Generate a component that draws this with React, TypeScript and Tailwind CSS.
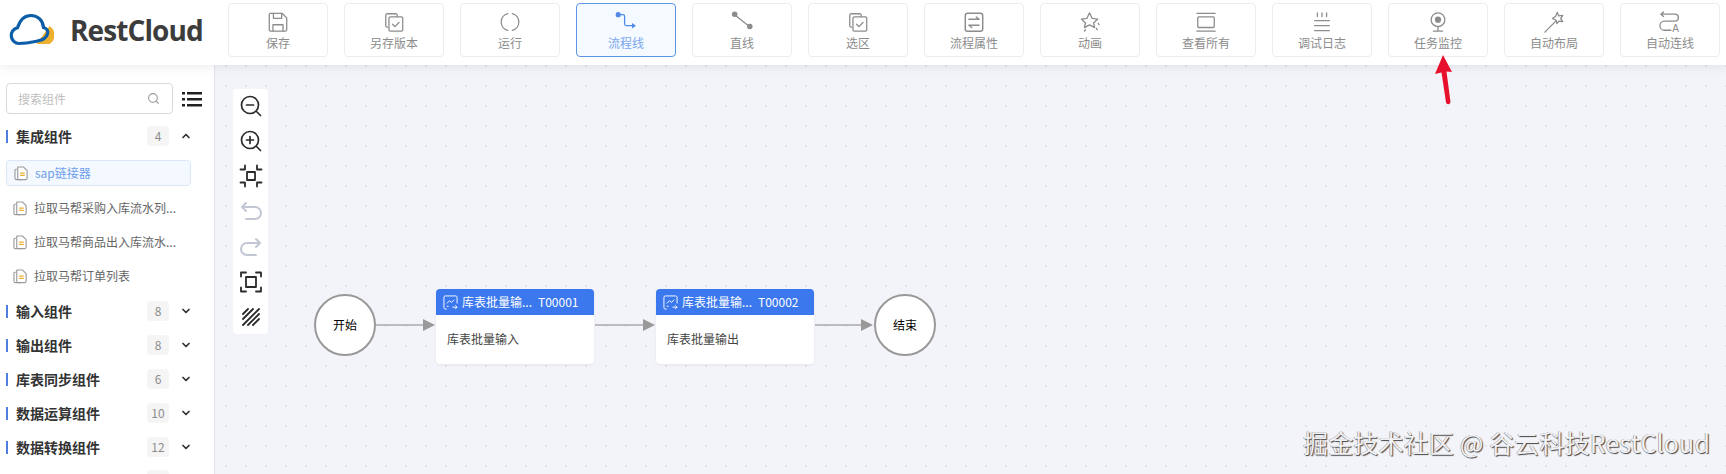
import type { ReactNode } from "react";
import { ChevronDown, ChevronUp, Search } from "lucide-react";

const cjk = "font-['Noto_Sans_CJK_SC','Noto_Sans',sans-serif]";

function Svg({ children, color = "#8c8c8c", width = 1.4, small = true }: { children: ReactNode; color?: string; width?: number; small?: boolean }) {
  return (
    <svg
      viewBox="0 0 24 24"
      className={small ? "h-[22px] w-[22px]" : "h-6 w-6"}
      fill="none"
      stroke={color}
      strokeWidth={width}
      strokeLinecap="round"
      strokeLinejoin="round"
    >
      {children}
    </svg>
  );
}

const CopyCheck = () => (
  <Svg>
    <path d="M5 17.500h-.5A1.500 1.500 0 0 1 3 16V4.500A1.500 1.500 0 0 1 4.500 3H14a1.500 1.500 0 0 1 1.500 1.500V6" />
    <rect x="6.500" y="6.500" width="15" height="15.500" rx="1.500" />
    <path d="m10.500 14.500 2.500 2.500 4.500-4.500" />
  </Svg>
);

const tools: { label: string; icon: ReactNode; active?: boolean }[] = [
  {
    label: "保存",
    icon: (
      <Svg>
        <path d="M3.500 2.500h13l5 5v13a1.500 1.500 0 0 1-1.500 1.500H4a1.500 1.500 0 0 1-1.500-1.500V4a1.500 1.500 0 0 1 1-1.500Z" />
        <path d="M7 2.500V8h9V2.500M6.500 22v-7h11v7" />
      </Svg>
    ),
  },
  { label: "另存版本", icon: <CopyCheck /> },
  {
    label: "运行",
    icon: (
      <Svg>
        <path d="M9.500 2.800a9.500 9.500 0 0 0 0 18.400M14.500 2.800a9.500 9.500 0 0 1 0 18.400" />
      </Svg>
    ),
  },
  {
    label: "流程线",
    active: true,
    icon: (
      <Svg color="#4f8ae6">
        <circle cx="3.500" cy="4" r="2.800" fill="#4f8ae6" stroke="none" />
        <path d="M6 4h2.500a2 2 0 0 1 2 2v8a2 2 0 0 0 2 2h7" />
        <path d="M18.500 13v6l4.500-3Z" fill="#4f8ae6" stroke="none" />
      </Svg>
    ),
  },
  {
    label: "直线",
    icon: (
      <Svg>
        <path d="m4 4 16 13" />
        <circle cx="4" cy="3.500" r="3" fill="#8c8c8c" stroke="none" />
        <circle cx="20.500" cy="17" r="3" fill="#8c8c8c" stroke="none" />
      </Svg>
    ),
  },
  { label: "选区", icon: <CopyCheck /> },
  {
    label: "流程属性",
    icon: (
      <Svg width={1.6}>
        <rect x="2.500" y="2.500" width="19" height="19.500" rx="2.500" />
        <path d="M6.500 9h11M14.500 6.500l3 2.500M17.500 15.500h-11M9.500 18l-3-2.500" />
      </Svg>
    ),
  },
  {
    label: "动画",
    icon: (
      <Svg>
        <path d="m11.500 2 2.800 6 6.200.8-4.600 4.300 1.200 5-5.600-3-5.600 3 1.200-5L2.500 8.800l6.200-.8Z" />
        <path d="m21 13.500 1 1.500M19 19l1 1.500M7 20.500 6 22" />
      </Svg>
    ),
  },
  {
    label: "查看所有",
    icon: (
      <Svg>
        <path d="M2 2.500h20M2 22h20" />
        <rect x="3" y="6.500" width="18" height="11.500" rx="1" />
      </Svg>
    ),
  },
  {
    label: "调试日志",
    icon: (
      <Svg>
        <path d="M7 2v4M12 2v4M17 2v4M4 10.500h16M4 16h16M4 21.500h16" />
      </Svg>
    ),
  },
  {
    label: "任务监控",
    icon: (
      <Svg>
        <circle cx="12" cy="9.500" r="7.500" />
        <circle cx="12" cy="9.500" r="2.700" fill="#8c8c8c" />
        <path d="M12 17v4M7 22h10" />
      </Svg>
    ),
  },
  {
    label: "自动布局",
    icon: (
      <Svg>
        <path d="m2 23 12.500-12.500" />
        <path d="m15.500 1.500 1.600 3.700 4.500-.5-2.300 3.700 2.200 3.100-4.300-.5-2 2.800-1.200-4-3.800-1.600 3.500-2.200Z" />
      </Svg>
    ),
  },
  {
    label: "自动连线",
    icon: (
      <Svg>
        <path d="M5 1 2 3.500 5 6M2 3.500h16a3.800 3.800 0 0 1 0 7.500H6a4.500 4.500 0 0 0 0 10h7" />
        <text x="14.500" y="22.500" fontSize="11" fill="#8c8c8c" stroke="none" fontFamily="Liberation Sans, sans-serif">
          A
        </text>
      </Svg>
    ),
  },
];

function ToolButton({ label, icon, active }: { label: string; icon: ReactNode; active?: boolean }) {
  return (
    <div
      className={
        active
          ? "flex h-[54px] w-[100px] shrink-0 flex-col items-center rounded border border-[#5c94e8] bg-[#f4faff] pt-[7px] text-xs leading-[18px] text-[#7aa5ee]"
          : "flex h-[54px] w-[100px] shrink-0 flex-col items-center rounded border border-[#ececee] bg-white pt-[7px] text-xs leading-[18px] text-[#8c8c8c]"
      }
    >
      {icon}
      <span className="mt-px">{label}</span>
    </div>
  );
}

function Logo() {
  return (
    <div className="flex h-[54px] w-[228px] shrink-0 items-center pl-2">
      <svg viewBox="0 0 46 34" className="h-[34px] w-[46px]" fill="none">
        <path d="M30 31h13a10.500 10.500 0 0 0 0-18Z" fill="#edb02e" transform="translate(-1.500 0)" />
        <path
          d="M11 30.500a8 8 0 0 1-1.500-15.800C12 7 17 2.500 23 2.500c7 0 12 5 12.500 12 3.500 1 5 3.500 4 6.500-1 3.500-5 6-10 7-4 .8-10 2.500-18.500 2.500Z"
          stroke="#0d5ea8"
          strokeWidth="3.200"
        />
      </svg>
      <span className="ml-4 font-['Open_Sans',sans-serif] text-[28px] font-bold tracking-[-0.9px] text-[#3c3c3c]">RestCloud</span>
    </div>
  );
}

function DocIcon() {
  return (
    <svg viewBox="0 0 16 16" className="h-[15px] w-[15px] shrink-0" fill="none" strokeLinejoin="round">
      <path d="M3 3.500H2a1 1 0 0 0-1 1V13a1.500 1.500 0 0 0 1.500 1.500H8" stroke="#9a9a9a" strokeWidth="1.200" />
      <path d="M4 1h6l4 4v8a1.500 1.500 0 0 1-1.500 1.500h-7A1.500 1.500 0 0 1 4 13Z" fill="#fff" stroke="#9a9a9a" strokeWidth="1.200" />
      <path d="M6.500 7.500h5M6.500 10h5" stroke="#edb02e" strokeWidth="1.300" />
    </svg>
  );
}

function SectionRow({ name, count, open }: { name: string; count: number; open?: boolean }) {
  return (
    <div className="flex h-[34px] items-center pl-1.5">
      <span className="h-[13px] w-0.5 bg-[#4f7fdc]" />
      <span className="ml-2 w-[131px] text-sm font-bold text-[#333]">{name}</span>
      <span className="flex h-5 w-[22px] items-center justify-center rounded-sm bg-[#f5f5f5] text-xs text-[#8c8c8c]">{count}</span>
      {open ? (
        <ChevronUp className="ml-[11px] h-3 w-3 text-[#333]" strokeWidth={3.500} />
      ) : (
        <ChevronDown className="ml-[11px] h-3 w-3 text-[#333]" strokeWidth={3.500} />
      )}
    </div>
  );
}

function Sidebar() {
  const items = ["拉取马帮采购入库流水列...", "拉取马帮商品出入库流水...", "拉取马帮订单列表"];
  const sections: [string, number][] = [
    ["输入组件", 8],
    ["输出组件", 8],
    ["库表同步组件", 6],
    ["数据运算组件", 10],
    ["数据转换组件", 12],
  ];
  return (
    <aside className="h-[409px] w-[215px] shrink-0 overflow-hidden border-r border-[#e3e5ea] bg-white pt-[18px]">
      <div className="flex items-center pl-1.5">
        <div className="flex h-[31px] w-[167px] items-center justify-between rounded border border-[#d9d9d9] pl-[11px] pr-3 text-xs text-[#bfbfbf]">
          搜索组件
          <Search className="h-[13px] w-[13px] text-[#999]" />
        </div>
        <svg viewBox="0 0 20 16" className="ml-[9px] h-4 w-5" fill="#222">
          <rect x="0" y="1" width="3" height="2.500" />
          <rect x="5" y="1" width="15" height="2.500" />
          <rect x="0" y="7" width="3" height="2.500" />
          <rect x="5" y="7" width="15" height="2.500" />
          <rect x="0" y="13" width="3" height="2.500" />
          <rect x="5" y="13" width="15" height="2.500" />
        </svg>
      </div>
      <div className="mt-[5px]">
        <SectionRow name="集成组件" count={4} open />
      </div>
      <div className="mx-1.5 mt-[7px] flex h-[26px] w-[185px] items-center gap-[6px] rounded border border-[#dbe7f7] bg-[#f4f9ff] pl-[7px] text-xs text-[#6d9eeb]">
        <DocIcon />
        sap链接器
      </div>
      <div className="mt-[5px]">
        {items.map((item) => (
          <div key={item} className="flex h-[34px] items-center gap-[6px] pl-[13px] text-xs text-[#666]">
            <DocIcon />
            {item}
          </div>
        ))}
      </div>
      <div className="mt-px">
        {sections.map(([name, count]) => (
          <SectionRow key={name} name={name} count={count} />
        ))}
      </div>
      <div className="ml-[147px] mt-[6px] h-5 w-[22px] rounded-sm bg-[#f5f5f5]" />
    </aside>
  );
}

function CanvasTools() {
  const dark = "#2b2b2b";
  const light = "#c3c7d4";
  return (
    <div className="absolute left-[18px] top-[24px] flex h-[245px] w-[35px] flex-col items-center justify-between rounded-sm bg-white py-[5px]">
      <Svg color={dark} width={1.700} small={false}>
        <circle cx="11" cy="11" r="8.500" />
        <path d="m17.500 17.500 4 4M7.500 11h7" />
      </Svg>
      <Svg color={dark} width={1.700} small={false}>
        <circle cx="11" cy="11" r="8.500" />
        <path d="m17.500 17.500 4 4M7.500 11h7M11 7.500v7" />
      </Svg>
      <Svg color={dark} width={1.800} small={false}>
        <rect x="8" y="8" width="8" height="8" />
        <path d="M6 1.500V5.500H1.500M18 1.500V5.500h4.500M6 22.500V18.500H1.500M18 22.500V18.500h4.500" />
      </Svg>
      <Svg color={light} width={2} small={false}>
        <path d="M7 4 3 8l4 4M3 8h13a5.500 5.500 0 0 1 0 12H7" />
      </Svg>
      <Svg color={light} width={2} small={false}>
        <path d="m17 4 4 4-4 4M21 8H8a5.500 5.500 0 0 0 0 12h9" />
      </Svg>
      <Svg color={dark} width={1.800} small={false}>
        <rect x="7" y="7" width="10" height="10" />
        <path d="M2 6.500V2.500h5M17 2.500h5v4M2 17.500v4h5M17 21.500h5v-4" />
      </Svg>
      <Svg color={dark} width={1.800} small={false}>
        <path d="M4 9 9 4M4 14 14 4M4 20 20 4M9 20 20 9M14 20l6-6" />
      </Svg>
    </div>
  );
}

function CircleNode({ label, left }: { label: string; left: string }) {
  return (
    <div
      className={`absolute top-[229px] flex h-[62px] w-[62px] items-center justify-center rounded-full border-2 border-[#999] bg-white text-xs text-black ${left}`}
    >
      {label}
    </div>
  );
}

function TaskNode({ title, code, body, left }: { title: string; code: string; body: string; left: string }) {
  return (
    <div className={`absolute top-[224px] h-[75px] w-[158px] overflow-hidden rounded bg-white text-xs shadow-[0_1px_3px_rgba(0,0,0,0.06)] ${left}`}>
      <div className="flex h-[26px] items-center bg-[#3b78ee] pl-[7px] text-white">
        <svg viewBox="0 0 16 16" className="h-[15px] w-[15px]" fill="none" stroke="#fff" strokeWidth="1">
          <path d="M4 15H2.500A1.500 1.500 0 0 1 1 13.500v-11A1.500 1.500 0 0 1 2.500 1h11A1.500 1.500 0 0 1 15 2.500V9" />
          <path d="m4 9 3-3 2 2 3-3M4 12h2M10 13h5m-2-2 2 2-2 2" />
        </svg>
        <span className="ml-[4px]">{title}</span>
        <span className="ml-1.5">{code}</span>
      </div>
      <div className="pl-[11px] pt-4 text-[#444]">{body}</div>
    </div>
  );
}

function Edge({ x, w }: { x: number; w: number }) {
  return (
    <svg className="absolute top-[254px]" style={{ left: x, width: w }} height="12" viewBox={`0 0 ${w} 12`}>
      <path d={`M0 6H${w - 12}`} stroke="#aaa" strokeWidth="1.500" />
      <path d={`M${w - 13} 0l12 6-12 6Z`} fill="#999" />
    </svg>
  );
}

export default function App() {
  return (
    <div className={`relative flex h-[474px] w-[1726px] flex-col overflow-hidden bg-[#f3f4f9] ${cjk}`}>
      <header className="relative z-10 flex h-[65px] shrink-0 items-start bg-white pt-[3px] shadow-[0_2px_10px_rgba(0,0,0,0.08)]">
        <Logo />
        <div className="flex gap-4">
          {tools.map((t) => (
            <ToolButton key={t.label} {...t} />
          ))}
        </div>
      </header>
      <main className="flex min-h-0 flex-1">
        <Sidebar />
        <section className="relative flex-1 bg-[radial-gradient(circle,#e2e4eb_1px,transparent_1.2px)] bg-[size:20px_20px] bg-[position:1px_11px]">
          <CanvasTools />
          <CircleNode label="开始" left="left-[99px]" />
          <Edge x={161} w={60} />
          <TaskNode title="库表批量输..." code="T00001" body="库表批量输入" left="left-[221px]" />
          <Edge x={380} w={61} />
          <TaskNode title="库表批量输..." code="T00002" body="库表批量输出" left="left-[441px]" />
          <Edge x={600} w={59} />
          <CircleNode label="结束" left="left-[659px]" />
          <div className="absolute left-[1088px] top-[361px] whitespace-nowrap text-[25px] leading-8 tracking-[0.15px] text-[#f0f1f5] [text-shadow:1px_1px_1px_#444,-0.5px_-0.5px_0.5px_#888]">
            掘金技术社区 @ 谷云科技RestCloud
          </div>
        </section>
      </main>
      <svg className="absolute left-[1430px] top-[50px] z-20 h-[58px] w-6" viewBox="0 0 24 58" fill="#e8112d">
        <path d="M13 5 22 22 16.500 21.500 20.500 52a2.300 2.300 0 0 1-4.500.5L11.500 22.500 5 24Z" />
      </svg>
    </div>
  );
}
